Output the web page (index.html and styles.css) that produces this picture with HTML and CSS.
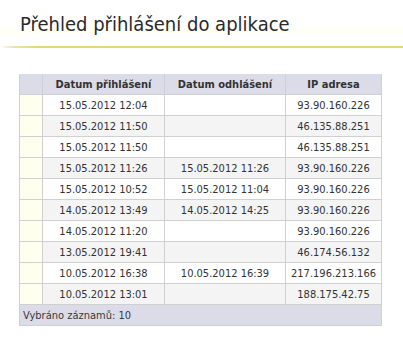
FILE: index.html
```html
<!DOCTYPE html>
<html lang="cs">
<head>
<meta charset="utf-8">
<link rel="stylesheet" href="styles.css">
</head>
<body>
<div class="page">
  <h1 class="title">Přehled přihlášení do aplikace</h1>
  <div class="rule"></div>
  <table class="grid">
    <thead>
      <tr>
        <th class="sel"></th>
        <th class="c2">Datum přihlášení</th>
        <th class="c3">Datum odhlášení</th>
        <th class="c4">IP adresa</th>
      </tr>
    </thead>
    <tbody>
      <tr><td class="sel"></td><td>15.05.2012 12:04</td><td></td><td>93.90.160.226</td></tr>
      <tr class="alt"><td class="sel"></td><td>15.05.2012 11:50</td><td></td><td>46.135.88.251</td></tr>
      <tr><td class="sel"></td><td>15.05.2012 11:50</td><td></td><td>46.135.88.251</td></tr>
      <tr class="alt"><td class="sel"></td><td>15.05.2012 11:26</td><td>15.05.2012 11:26</td><td>93.90.160.226</td></tr>
      <tr><td class="sel"></td><td>15.05.2012 10:52</td><td>15.05.2012 11:04</td><td>93.90.160.226</td></tr>
      <tr class="alt"><td class="sel"></td><td>14.05.2012 13:49</td><td>14.05.2012 14:25</td><td>93.90.160.226</td></tr>
      <tr><td class="sel"></td><td>14.05.2012 11:20</td><td></td><td>93.90.160.226</td></tr>
      <tr class="alt"><td class="sel"></td><td>13.05.2012 19:41</td><td></td><td>46.174.56.132</td></tr>
      <tr><td class="sel"></td><td>10.05.2012 16:38</td><td>10.05.2012 16:39</td><td>217.196.213.166</td></tr>
      <tr class="alt"><td class="sel"></td><td>10.05.2012 13:01</td><td></td><td>188.175.42.75</td></tr>
    </tbody>
    <tfoot>
      <tr><td colspan="4" class="foot">Vybráno záznamů: 10</td></tr>
    </tfoot>
  </table>
</div>
</body>
</html>
```
FILE: styles.css
```css
html, body {
  margin: 0;
  padding: 0;
  background: #ffffff;
}
.page {
  font-family: "DejaVu Sans Condensed", "DejaVu Sans", sans-serif;
  color: #333333;
}
.title {
  margin: 0;
  padding: 13px 0 0 20px;
  height: 34px;
  box-sizing: border-box;
  font-size: 20px;
  font-weight: normal;
  line-height: 22px;
  color: #2b2b2b;
  background: linear-gradient(to bottom, #ffffff 0, #ffffff 70%, #fffff4 100%);
}
.rule {
  height: 2px;
  margin-top: 12px;
  background: linear-gradient(to right, #ffffff 0, #ece3a6 14px, #e4d57e 40px, #e4d57e 100%);
}
.grid {
  margin: 26px 0 0 19px;
  border-collapse: collapse;
  width: 363px;
  table-layout: fixed;
  font-size: 11px;
  border: 1px solid #d6d6de;
}
.grid th,
.grid td {
  border: 1px solid #d0d0d0;
  padding: 0;
  text-align: center;
  white-space: nowrap;
  overflow: hidden;
}
.grid th {
  height: 19px;
  background: #dcdce8;
  font-weight: bold;
  color: #333333;
  border-color: #dcdce8 #cfcfd8 #cfcfd8 #cfcfd8;
}
.grid th.sel { width: 22px; }
.grid th.c2 { width: 121px; }
.grid th.c3 { width: 120px; }
.grid td {
  height: 20px;
  background: #ffffff;
}
.grid tr.alt td {
  background: #f4f4f4;
}
.grid td.sel,
.grid tr.alt td.sel {
  background: #fffff0;
}
.grid td.foot {
  height: 20px;
  text-align: left;
  padding-left: 3px;
  background: #dcdce8;
  border-color: #cfcfd8;
  color: #3a3a3a;
}
```
